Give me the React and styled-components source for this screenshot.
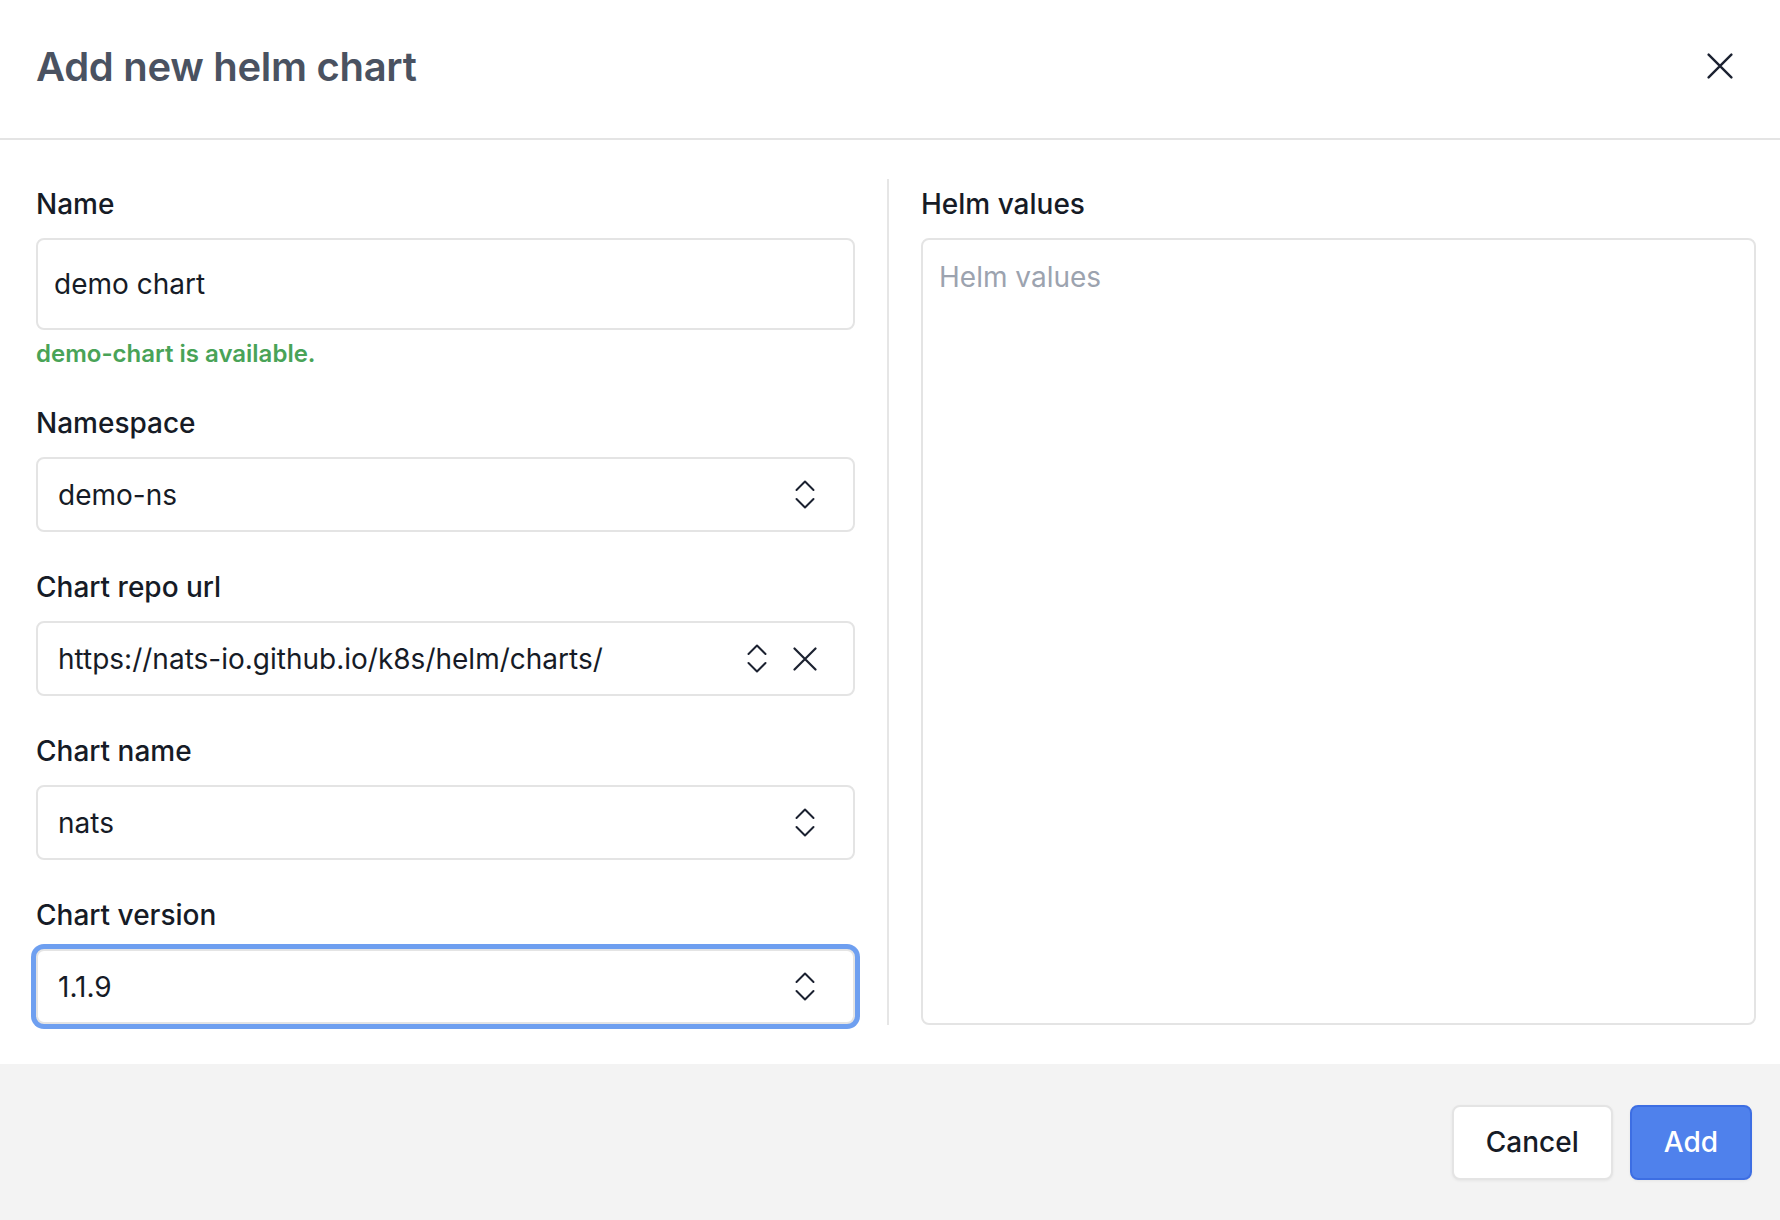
import { useState } from "react";
import styled, { createGlobalStyle } from "styled-components";

const GlobalStyle = createGlobalStyle`
  html, body {
    margin: 0;
    padding: 0;
    background: #ffffff;
    font-family: Inter, "Noto Sans", sans-serif;
    color: #161b26;
  }
  * {
    box-sizing: border-box;
  }
`;

function ChevronUpDown() {
  return (
    <svg width="20" height="31" viewBox="0 0 20 31" fill="none">
      <path
        d="M1.5 11L10 2.5L18.5 11M1.5 20L10 28.5L18.5 20"
        stroke="#1b2130"
        strokeWidth="2"
        strokeLinecap="round"
        strokeLinejoin="round"
      />
    </svg>
  );
}

function CloseIcon({ size = 24 }) {
  return (
    <svg width={size} height={size} viewBox="0 0 24 24" fill="none">
      <path
        d="M1.5 1.5L22.5 22.5M22.5 1.5L1.5 22.5"
        stroke="#1b2130"
        strokeWidth="2.2"
        strokeLinecap="round"
      />
    </svg>
  );
}

function Select({ value, clearable, focused }) {
  return (
    <STYLEDSelect $focused={focused}>
      <STYLEDSelectValue>{value}</STYLEDSelectValue>
      <STYLEDIconSlot>
        <ChevronUpDown />
      </STYLEDIconSlot>
      {clearable && (
        <STYLEDIconSlot>
          <CloseIcon />
        </STYLEDIconSlot>
      )}
    </STYLEDSelect>
  );
}

function App() {
  const [name, setName] = useState("demo chart");
  const [values, setValues] = useState("");

  return (
    <>
      <GlobalStyle />
      <STYLEDModal>
        <STYLEDHeader>
          <STYLEDTitle>Add new helm chart</STYLEDTitle>
          <STYLEDCloseButton aria-label="Close">
            <CloseIcon size={26} />
          </STYLEDCloseButton>
        </STYLEDHeader>

        <STYLEDBody>
          <STYLEDColumn>
            <STYLEDField>
              <STYLEDLabel>Name</STYLEDLabel>
              <STYLEDInput
                value={name}
                onChange={(e) => setName(e.target.value)}
              />
              <STYLEDHelper>demo-chart is available.</STYLEDHelper>
            </STYLEDField>
            <STYLEDField>
              <STYLEDLabel>Namespace</STYLEDLabel>
              <Select value="demo-ns" />
            </STYLEDField>
            <STYLEDField>
              <STYLEDLabel>Chart repo url</STYLEDLabel>
              <Select value="https://nats-io.github.io/k8s/helm/charts/" clearable />
            </STYLEDField>
            <STYLEDField>
              <STYLEDLabel>Chart name</STYLEDLabel>
              <Select value="nats" />
            </STYLEDField>
            <STYLEDField>
              <STYLEDLabel>Chart version</STYLEDLabel>
              <Select value="1.1.9" focused />
            </STYLEDField>
          </STYLEDColumn>

          <STYLEDDivider />

          <STYLEDColumn>
            <STYLEDLabel>Helm values</STYLEDLabel>
            <STYLEDTextarea
              placeholder="Helm values"
              value={values}
              onChange={(e) => setValues(e.target.value)}
            />
          </STYLEDColumn>
        </STYLEDBody>

        <STYLEDFooter>
          <STYLEDButton>Cancel</STYLEDButton>
          <STYLEDButton $primary>Add</STYLEDButton>
        </STYLEDFooter>
      </STYLEDModal>
    </>
  );
}

export default App;

const STYLEDModal = styled.div`
  display: flex;
  flex-direction: column;
  width: 1780px;
  height: 1220px;
  background: #ffffff;
`;

const STYLEDHeader = styled.header`
  display: flex;
  align-items: center;
  justify-content: space-between;
  height: 140px;
  padding: 0 47px 6px 36px;
  border-bottom: 2px solid #e4e4e4;
`;

const STYLEDTitle = styled.h1`
  margin: 0;
  font-size: 40px;
  font-weight: 600;
  letter-spacing: -0.3px;
  color: #4a5261;
`;

const STYLEDCloseButton = styled.button`
  display: flex;
  padding: 0;
  border: none;
  background: none;
  cursor: pointer;
`;

const STYLEDBody = styled.div`
  flex: 1;
  display: grid;
  grid-template-columns: 819px 2px 1fr;
  column-gap: 32px;
  padding: 44px 24px 39px 36px;
`;

const STYLEDColumn = styled.div`
  display: flex;
  flex-direction: column;
`;

const STYLEDDivider = styled.div`
  margin-top: -5px;
  background: #e6e6e6;
`;

const STYLEDField = styled.div`
  display: flex;
  flex-direction: column;
  & + & {
    margin-top: 35px;
  }
`;

const STYLEDLabel = styled.label`
  display: block;
  height: 40px;
  line-height: 40px;
  margin-bottom: 14px;
  font-size: 28px;
  font-weight: 500;
  color: #161b26;
`;

const STYLEDInput = styled.input`
  height: 92px;
  width: 100%;
  padding: 0 16px;
  border: 2px solid #e4e4e4;
  border-radius: 8px;
  font-family: Inter, "Noto Sans", sans-serif;
  font-size: 28px;
  color: #161b26;
  outline: none;
`;

const STYLEDHelper = styled.div`
  margin-top: 10px;
  line-height: 28px;
  font-size: 24px;
  font-weight: 600;
  color: #49a357;
`;

const STYLEDSelect = styled.div`
  display: flex;
  align-items: center;
  gap: 24px;
  height: 75px;
  padding: 0 36px 0 20px;
  border: 2px solid #e4e4e4;
  border-radius: 8px;
  background: #ffffff;
  box-shadow: ${(p) => (p.$focused ? "0 0 0 5px #6e9ff0" : "none")};
`;

const STYLEDSelectValue = styled.span`
  flex: 1;
  font-size: 28px;
  color: #161b26;
  white-space: nowrap;
  overflow: hidden;
`;

const STYLEDIconSlot = styled.span`
  display: flex;
  align-items: center;
  justify-content: center;
  width: 24px;
`;

const STYLEDTextarea = styled.textarea`
  flex: 1;
  width: 100%;
  padding: 17px 16px;
  border: 2px solid #e4e4e4;
  border-radius: 8px;
  resize: none;
  outline: none;
  font-family: Inter, "Noto Sans", sans-serif;
  font-size: 28px;
  line-height: 40px;
  color: #161b26;
  &::placeholder {
    color: #9ca3af;
  }
`;

const STYLEDFooter = styled.footer`
  display: flex;
  align-items: center;
  justify-content: flex-end;
  gap: 17px;
  height: 156px;
  padding: 0 28px;
  background: #f3f3f3;
`;

const STYLEDButton = styled.button`
  height: 75px;
  padding: 0 32px;
  border: 2px solid ${(p) => (p.$primary ? "#3d6ee3" : "#e4e4e4")};
  border-radius: 8px;
  background: ${(p) => (p.$primary ? "#4f81ec" : "#ffffff")};
  color: ${(p) => (p.$primary ? "#ffffff" : "#161b26")};
  box-shadow: 0 1px 3px rgba(0, 0, 0, 0.06);
  font-family: Inter, "Noto Sans", sans-serif;
  font-size: 28px;
  font-weight: 500;
  cursor: pointer;
`;
